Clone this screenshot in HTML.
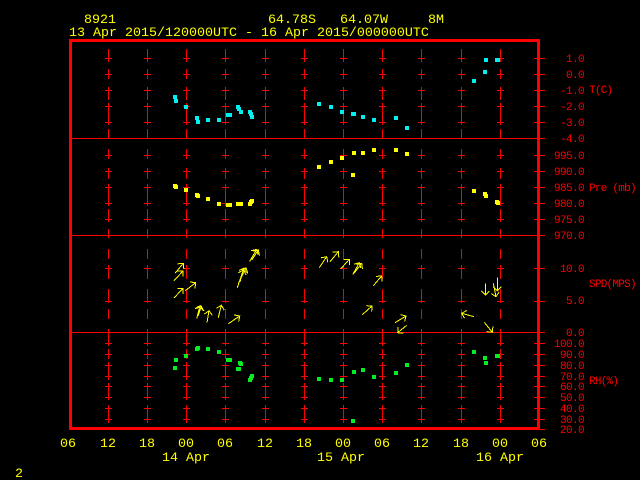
<!DOCTYPE html>
<html>
<head>
<meta charset="utf-8">
<style>
html,body{margin:0;padding:0;background:#000;width:640px;height:480px;overflow:hidden}
svg{display:block}
text{font-family:"Liberation Mono",monospace;white-space:pre}
.y{fill:#ffff00;font-size:13.33px}
.r{fill:#ff0000;font-size:11px;letter-spacing:-0.6px;text-anchor:end}
.l{fill:#ff0000;font-size:11px;letter-spacing:-0.75px}
</style>
</head>
<body>
<svg width="640" height="480" viewBox="0 0 640 480" xmlns="http://www.w3.org/2000/svg">
<defs>
<path id="col" d="M.5 49V62M.5 69V79M.5 87V100M.5 103V125M.5 129V138M.5 149V159M.5 168V179M.5 184V206M.5 209V222M.5 229V238M.5 249V259M.5 265V279M.5 289V303M.5 309V319M.5 329V346M.5 349V359M.5 362V380M.5 383V400M.5 405V423" fill="none" stroke="#f00" shape-rendering="crispEdges"/>
<path id="tk" d="M-3 58.5H4M-3 74.5H4M-3 90.5H4M-3 106.5H4M-3 122.5H4M-3 155.5H4M-3 171.5H4M-3 187.5H4M-3 203.5H4M-3 219.5H4M-3 268.5H4M-3 301.5H4M-3 343.5H4M-3 354.5H4M-3 365.5H4M-3 376.5H4M-3 386.5H4M-3 397.5H4M-3 408.5H4M-3 419.5H4" fill="none" stroke="#f00" shape-rendering="crispEdges"/>
<marker id="ah" markerUnits="userSpaceOnUse" markerWidth="12" markerHeight="12" refX="6" refY="6" orient="auto" overflow="visible">
<path d="M2 2L6 6L2 10" fill="none" stroke="#ffff00" stroke-width="1" shape-rendering="crispEdges"/>
</marker>
</defs>

<!-- column ticks -->
<g>
<use href="#col" x="108"/><use href="#col" x="147"/><use href="#col" x="186"/><use href="#col" x="225"/><use href="#col" x="265"/><use href="#col" x="304"/><use href="#col" x="343"/><use href="#col" x="382"/><use href="#col" x="421"/><use href="#col" x="461"/><use href="#col" x="500"/>
<use href="#tk" x="108"/><use href="#tk" x="147"/><use href="#tk" x="186"/><use href="#tk" x="225"/><use href="#tk" x="265"/><use href="#tk" x="304"/><use href="#tk" x="343"/><use href="#tk" x="382"/><use href="#tk" x="421"/><use href="#tk" x="461"/><use href="#tk" x="500"/>
</g>

<!-- frame -->
<g shape-rendering="crispEdges" fill="none" stroke="#f00">
<rect x="70.5" y="40.5" width="468" height="388" stroke-width="3"/>
<path d="M72 138.5H545M72 235.5H545M72 332.5H545"/>
<path d="M534 58.5H545M534 74.5H545M534 90.5H545M534 106.5H545M534 122.5H545M534 155.5H545M534 171.5H545M534 187.5H545M534 203.5H545M534 219.5H545M534 268.5H545M534 301.5H545M534 343.5H545M534 354.5H545M534 365.5H545M534 376.5H545M534 386.5H545M534 397.5H545M534 408.5H545M534 419.5H545M540 429.5H545"/>
</g>

<!-- points -->
<path shape-rendering="crispEdges" fill="#00f0f0" d="M173 95h4v4h-4zM174 99h4v4h-4zM184 105h4v4h-4zM195 116h4v4h-4zM196 120h4v4h-4zM206 118h4v4h-4zM217 118h4v4h-4zM226 113h4v4h-4zM228 113h4v4h-4zM236 105h4v4h-4zM237 107h4v4h-4zM239 110h4v4h-4zM248 110h4v4h-4zM249 112h4v4h-4zM250 115h4v4h-4zM317 102h4v4h-4zM329 105h4v4h-4zM340 110h4v4h-4zM351 112h4v4h-4zM352 112h4v4h-4zM361 115h4v4h-4zM372 118h4v4h-4zM394 116h4v4h-4zM405 126h4v4h-4zM472 79h4v4h-4zM483 70h4v4h-4zM484 58h4v4h-4zM495 58h4v4h-4zM496 58h4v4h-4z"/>
<path shape-rendering="crispEdges" fill="#ffff00" d="M173 184h4v4h-4zM174 185h4v4h-4zM184 188h4v4h-4zM195 193h4v4h-4zM196 194h4v4h-4zM206 197h4v4h-4zM217 202h4v4h-4zM226 203h4v4h-4zM228 203h4v4h-4zM236 202h4v4h-4zM239 202h4v4h-4zM238 202h4v4h-4zM248 202h4v4h-4zM249 200h4v4h-4zM250 199h4v4h-4zM317 165h4v4h-4zM329 160h4v4h-4zM340 156h4v4h-4zM351 173h4v4h-4zM352 151h4v4h-4zM361 151h4v4h-4zM372 148h4v4h-4zM394 148h4v4h-4zM405 152h4v4h-4zM472 189h4v4h-4zM483 192h4v4h-4zM484 194h4v4h-4zM495 200h4v4h-4zM496 201h4v4h-4z"/>
<path shape-rendering="crispEdges" fill="#00ee22" d="M173 366h4v4h-4zM174 358h4v4h-4zM184 354h4v4h-4zM195 347h4v4h-4zM196 346h4v4h-4zM206 347h4v4h-4zM217 350h4v4h-4zM226 358h4v4h-4zM228 358h4v4h-4zM236 367h4v4h-4zM237 367h4v4h-4zM238 361h4v4h-4zM239 362h4v4h-4zM248 378h4v4h-4zM249 376h4v4h-4zM250 374h4v4h-4zM317 377h4v4h-4zM329 378h4v4h-4zM340 378h4v4h-4zM351 419h4v4h-4zM352 370h4v4h-4zM361 368h4v4h-4zM372 375h4v4h-4zM394 371h4v4h-4zM405 363h4v4h-4zM472 350h4v4h-4zM483 356h4v4h-4zM484 361h4v4h-4zM495 354h4v4h-4zM496 354h4v4h-4z"/>

<!-- wind arrows -->
<g stroke="#ffff00" stroke-width="1" fill="none" shape-rendering="crispEdges">
<line x1="175" y1="273.3" x2="183.3" y2="263.3" marker-end="url(#ah)"/>
<line x1="174" y1="280.7" x2="183" y2="271" marker-end="url(#ah)"/>
<line x1="174" y1="298" x2="183" y2="288.3" marker-end="url(#ah)"/>
<line x1="185.3" y1="290.7" x2="195.7" y2="282.7" marker-end="url(#ah)"/>
<line x1="196.7" y1="318.7" x2="200" y2="305.7" marker-end="url(#ah)"/>
<line x1="198" y1="316" x2="201.3" y2="306" marker-end="url(#ah)"/>
<line x1="207" y1="322.7" x2="209" y2="310.7" marker-end="url(#ah)"/>
<line x1="218.3" y1="317.7" x2="221.3" y2="305.3" marker-end="url(#ah)"/>
<line x1="228.3" y1="323.7" x2="239.7" y2="316" marker-end="url(#ah)"/>
<line x1="230" y1="322.7" x2="239.7" y2="316" marker-end="url(#ah)"/>
<line x1="237.3" y1="287.7" x2="244" y2="268" marker-end="url(#ah)"/>
<line x1="238.3" y1="283.3" x2="246" y2="268" marker-end="url(#ah)"/>
<line x1="240" y1="281.7" x2="243.3" y2="270" marker-end="url(#ah)"/>
<line x1="249.7" y1="261.3" x2="256.7" y2="249.3" marker-end="url(#ah)"/>
<line x1="251.7" y1="260" x2="258.3" y2="250" marker-end="url(#ah)"/>
<line x1="319.3" y1="267.7" x2="326.7" y2="256.7" marker-end="url(#ah)"/>
<line x1="330" y1="261.7" x2="338.3" y2="251.7" marker-end="url(#ah)"/>
<line x1="340.7" y1="269" x2="349.3" y2="259.3" marker-end="url(#ah)"/>
<line x1="352.7" y1="274.7" x2="359.3" y2="262.7" marker-end="url(#ah)"/>
<line x1="354" y1="273.3" x2="361.7" y2="263.3" marker-end="url(#ah)"/>
<line x1="373.3" y1="285.7" x2="381.7" y2="276" marker-end="url(#ah)"/>
<line x1="362.3" y1="314.7" x2="372" y2="306" marker-end="url(#ah)"/>
<line x1="395" y1="322.7" x2="406" y2="316" marker-end="url(#ah)"/>
<line x1="406.7" y1="325.3" x2="397.7" y2="332.7" marker-end="url(#ah)"/>
<line x1="485.3" y1="283.3" x2="485.3" y2="295" marker-end="url(#ah)"/>
<line x1="497.3" y1="277.3" x2="497.3" y2="290.7" marker-end="url(#ah)"/>
<line x1="493.3" y1="283.3" x2="496" y2="296.7" marker-end="url(#ah)"/>
<line x1="474" y1="316.7" x2="461.7" y2="313.3" marker-end="url(#ah)"/>
<line x1="484.3" y1="322.3" x2="492.3" y2="332.3" marker-end="url(#ah)"/>
</g>

<!-- header -->
<text class="y" x="84" y="23">8921</text>
<text class="y" x="268" y="23">64.78S</text>
<text class="y" x="340" y="23">64.07W</text>
<text class="y" x="428" y="23">8M</text>
<text class="y" x="69" y="36">13 Apr 2015/120000UTC - 16 Apr 2015/000000UTC</text>

<!-- right scale -->
<text class="r" x="584" y="62">1.0</text>
<text class="r" x="584" y="78">0.0</text>
<text class="r" x="584" y="94">-1.0</text>
<text class="r" x="584" y="110">-2.0</text>
<text class="r" x="584" y="126">-3.0</text>
<text class="r" x="584" y="142">-4.0</text>
<text class="r" x="584" y="159">995.0</text>
<text class="r" x="584" y="175">990.0</text>
<text class="r" x="584" y="191">985.0</text>
<text class="r" x="584" y="207">980.0</text>
<text class="r" x="584" y="223">975.0</text>
<text class="r" x="584" y="239">970.0</text>
<text class="r" x="584" y="272">10.0</text>
<text class="r" x="584" y="304">5.0</text>
<text class="r" x="584" y="336">0.0</text>
<text class="r" x="584" y="347">100.0</text>
<text class="r" x="584" y="358">90.0</text>
<text class="r" x="584" y="369">80.0</text>
<text class="r" x="584" y="380">70.0</text>
<text class="r" x="584" y="390">60.0</text>
<text class="r" x="584" y="401">50.0</text>
<text class="r" x="584" y="412">40.0</text>
<text class="r" x="584" y="423">30.0</text>
<text class="r" x="584" y="433">20.0</text>
<text class="l" x="589" y="93">T(C)</text>
<text class="l" x="589" y="191">Pre (mb)</text>
<text class="l" x="589" y="287">SPD(MPS)</text>
<text class="l" x="589" y="384">RH(%)</text>

<!-- x axis -->
<text class="y" x="60" y="447">06</text>
<text class="y" x="100" y="447">12</text>
<text class="y" x="139" y="447">18</text>
<text class="y" x="178" y="447">00</text>
<text class="y" x="217" y="447">06</text>
<text class="y" x="257" y="447">12</text>
<text class="y" x="296" y="447">18</text>
<text class="y" x="335" y="447">00</text>
<text class="y" x="374" y="447">06</text>
<text class="y" x="413" y="447">12</text>
<text class="y" x="453" y="447">18</text>
<text class="y" x="492" y="447">00</text>
<text class="y" x="531" y="447">06</text>
<text class="y" x="162" y="461">14 Apr</text>
<text class="y" x="317" y="461">15 Apr</text>
<text class="y" x="476" y="461">16 Apr</text>
<text class="y" x="15" y="477">2</text>
</svg>
</body>
</html>
